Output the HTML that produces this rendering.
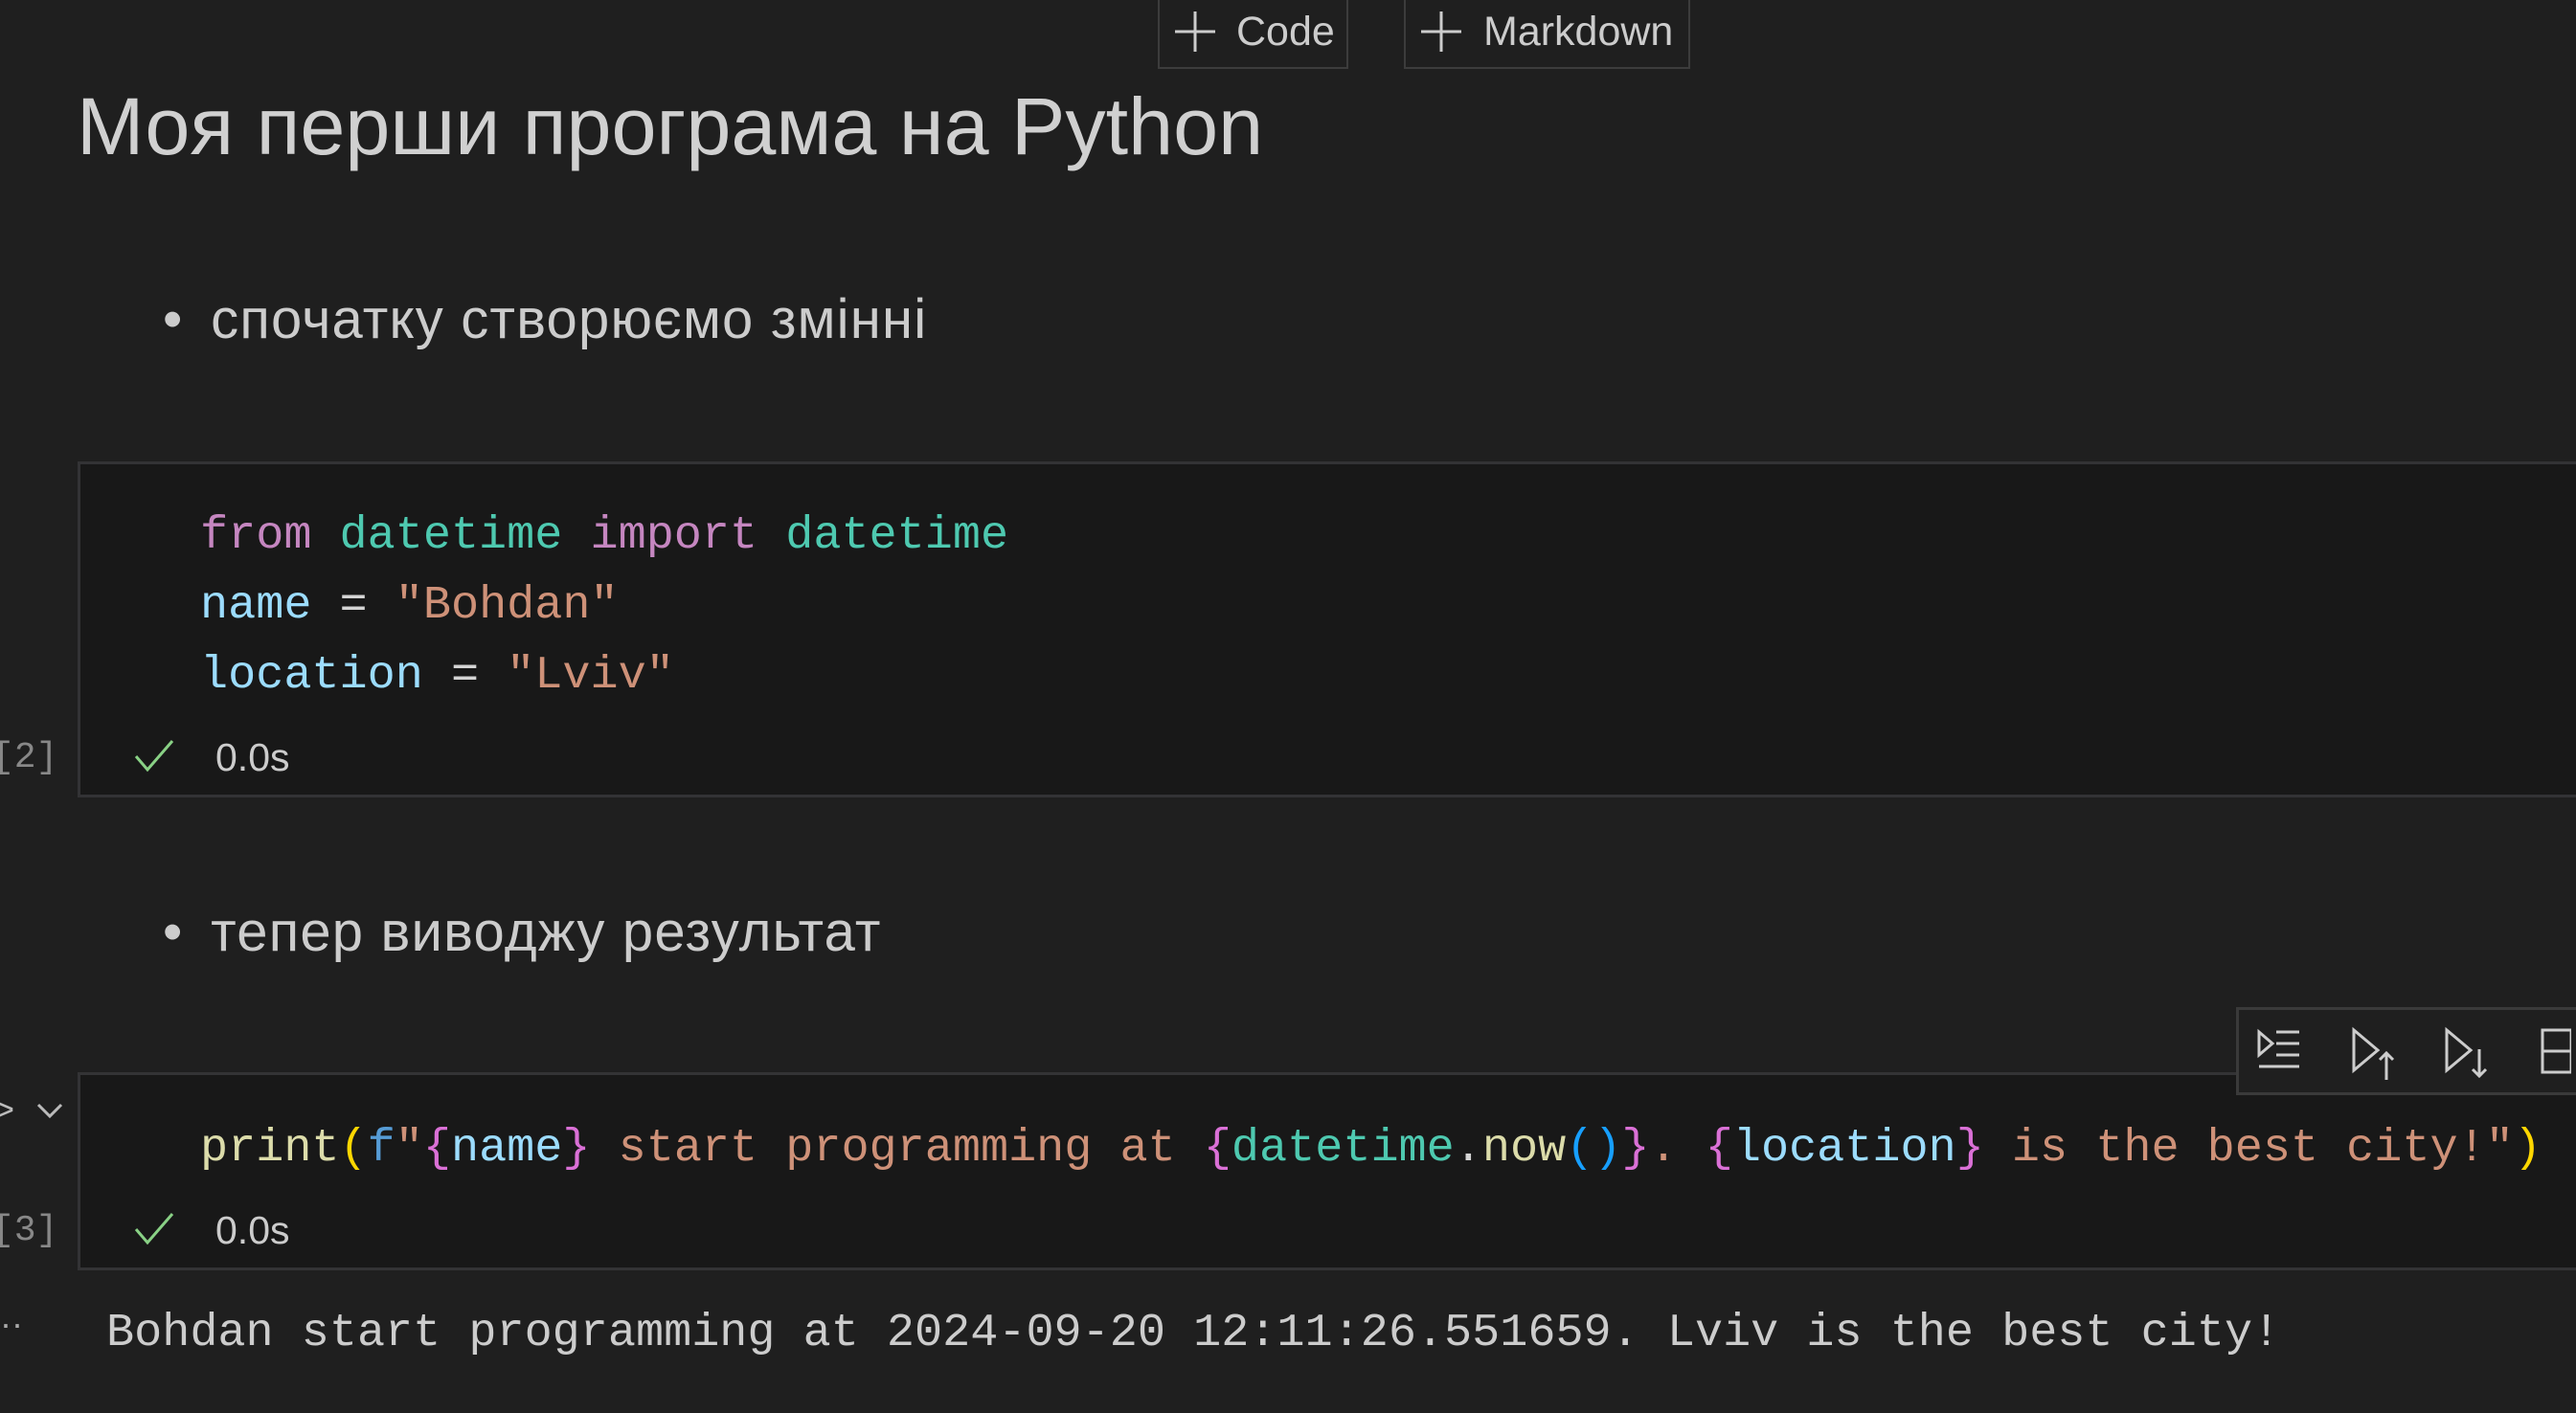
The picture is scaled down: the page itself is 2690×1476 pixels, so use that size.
<!DOCTYPE html>
<html><head><meta charset="utf-8"><style>
body{margin:0;width:2690px;height:1476px;background:#1f1f1f;overflow:hidden;position:relative;font-family:"Liberation Sans","Noto Sans CJK SC",sans-serif;color:#cccccc}
.a{position:absolute;white-space:pre}
.mono{font-family:"Liberation Mono",monospace;font-size:48.5px}
.btn{position:absolute;top:-4px;height:76px;border:2px solid #3c3c3c;box-sizing:border-box;font-size:43px;line-height:70px;color:#cccccc}
.cell{position:absolute;left:81px;right:-10px;background:#181818;border:3px solid #333335}
.k{color:#c586c0}.m{color:#4ec9b0}.v{color:#9cdcfe}.s{color:#ce9178}.f{color:#dcdcaa}.y{color:#ffd700}.b{color:#569cd6}.p{color:#da70d6}.q{color:#179fff}.w{color:#d4d4d4}
</style></head><body>
<div class="btn" style="left:1209px;width:199px"><svg style="position:absolute;left:16px;top:14px" width="42" height="42"><path d="M21 0V42M0 21H42" stroke="#ccc" stroke-width="3"/></svg><span style="position:absolute;left:80px">Code</span></div>
<div class="btn" style="left:1466px;width:299px"><svg style="position:absolute;left:16px;top:14px" width="42" height="42"><path d="M21 0V42M0 21H42" stroke="#ccc" stroke-width="3"/></svg><span style="position:absolute;left:81px">Markdown</span></div>
<div class="a" style="left:80px;top:84px;font-size:84.5px;color:#d0d0d0">Моя перши програма на Python</div>
<div class="a" style="left:170px;top:300px;font-size:58px;letter-spacing:1.2px">•  <span style="margin-left:-6px">спочатку створюємо змінні</span></div>
<div class="cell" style="top:482px;height:345px"></div>
<div class="a mono" style="left:209px;top:523px;line-height:73px"><span class="k">from</span> <span class="m">datetime</span> <span class="k">import</span> <span class="m">datetime</span>
<span class="v">name</span> <span class="w">=</span> <span class="s">"Bohdan"</span>
<span class="v">location</span> <span class="w">=</span> <span class="s">"Lviv"</span></div>
<div class="a mono" style="left:-8px;top:770px;font-size:38px;color:#888">[2]</div>
<svg class="a" style="left:140px;top:772px" width="42" height="36"><path d="M2 18 L14 32 L40 2" stroke="#89d185" stroke-width="3" fill="none"/></svg>
<div class="a" style="left:225px;top:768px;font-size:41px">0.0s</div>
<div class="a" style="left:170px;top:940px;font-size:58px;letter-spacing:1.2px">•  <span style="margin-left:-6px">тепер виводжу результат</span></div>
<div class="cell" style="top:1120px;height:201px"></div>
<div class="a" style="left:2335px;top:1052px;width:380px;height:92px;background:#1f1f1f;border:3px solid #3a3a3a;box-sizing:border-box"></div>
<svg class="a" style="left:2355px;top:1070px" width="330" height="60" fill="none" stroke="#cccccc" stroke-width="3">
<path d="M4 8 L4 32 L18 20 Z"/><path d="M22 8h24M22 20h24M22 32h24M4 44h42"/>
<path d="M103 6 L103 48 L128 27 Z"/><path d="M137 58 V30 M130 37 L137 30 L144 37"/>
<path d="M200 6 L200 48 L225 27 Z"/><path d="M234 26 V54 M227 47 L234 54 L241 47"/>
<path d="M300 6 H330 V50 H300 Z M300 28 H330"/>
</svg>
<div class="a" style="left:-6px;top:1138px;font-size:36px;color:#bbb">&gt;</div>
<svg class="a" style="left:38px;top:1150px" width="28" height="20"><path d="M2 4 L14 16 L26 4" stroke="#bbb" stroke-width="3" fill="none"/></svg>
<div class="a mono" style="left:209px;top:1170px;line-height:60px"><span class="f">print</span><span class="y">(</span><span class="b">f</span><span class="s">"</span><span class="p">{</span><span class="v">name</span><span class="p">}</span><span class="s"> start programming at </span><span class="p">{</span><span class="m">datetime</span><span class="w">.</span><span class="f">now</span><span class="q">()</span><span class="p">}</span><span class="s">. </span><span class="p">{</span><span class="v">location</span><span class="p">}</span><span class="s"> is the best city!"</span><span class="y">)</span></div>
<div class="a mono" style="left:-8px;top:1264px;font-size:38px;color:#888">[3]</div>
<svg class="a" style="left:140px;top:1266px" width="42" height="36"><path d="M2 18 L14 32 L40 2" stroke="#89d185" stroke-width="3" fill="none"/></svg>
<div class="a" style="left:225px;top:1262px;font-size:41px">0.0s</div>
<div class="a" style="left:0px;top:1362px;font-size:36px;color:#aaa">··</div>
<div class="a mono" style="left:111px;top:1365px;color:#cccccc">Bohdan start programming at 2024-09-20 12:11:26.551659. Lviv is the best city!</div>
</body></html>
